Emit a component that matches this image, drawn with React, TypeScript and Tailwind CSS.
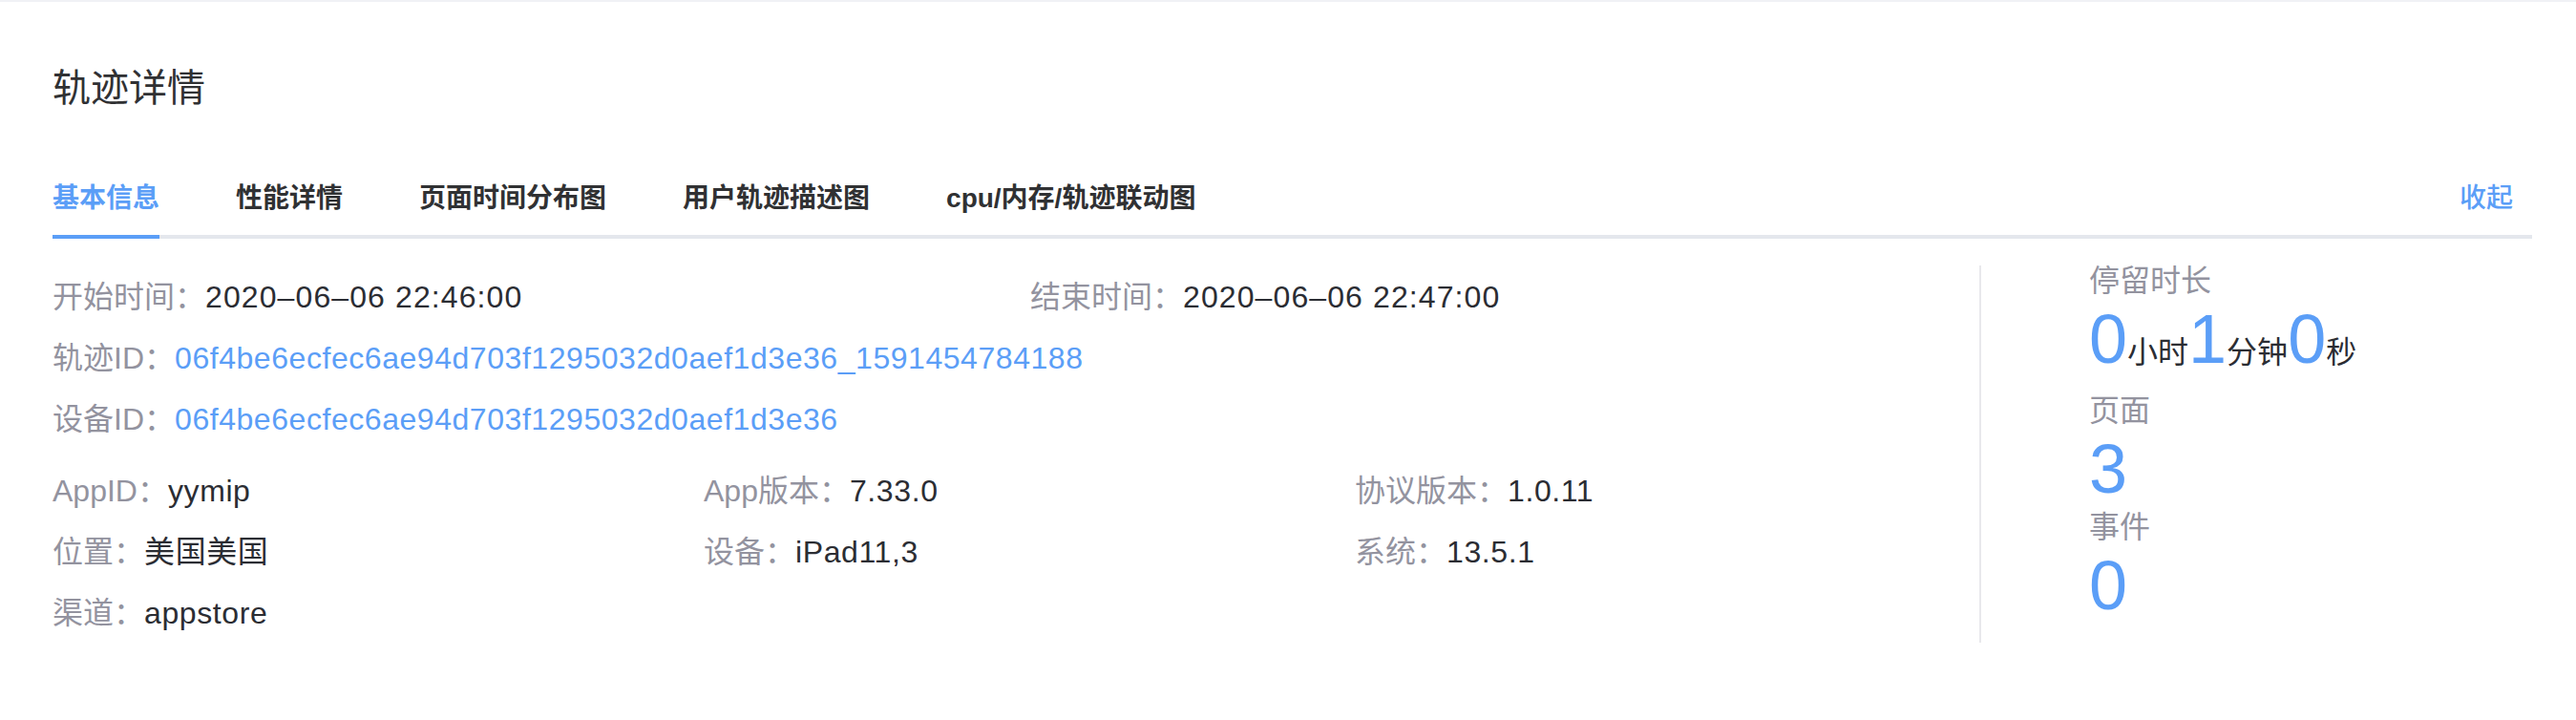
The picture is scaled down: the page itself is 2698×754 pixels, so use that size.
import React from "react";

const LABEL = "text-[#93939f]";
const VALUE = "text-[#2b2d33]";
const BLUE = "text-[#5b9ef7]";

function Field({
  label,
  value,
  blue,
  track = "tracking-[0.6px]",
}: {
  label: string;
  value: string;
  blue?: boolean;
  track?: string;
}) {
  return (
    <div className="whitespace-nowrap text-[32px] leading-[64px]">
      <span className={LABEL}>{label}：</span>
      <span className={(blue ? BLUE : VALUE) + " " + track}>{value}</span>
    </div>
  );
}

const tabs = ["基本信息", "性能详情", "页面时间分布图", "用户轨迹描述图", "cpu/内存/轨迹联动图"];

export default function App() {
  return (
    <div className="w-[2698px] h-[754px] bg-white font-['Liberation_Sans','Noto_Sans_CJK_SC',sans-serif] overflow-hidden">
      <div className="h-[2px] bg-[#f0f1f5]" />
      <div className="pl-[55px] pr-[46px]">
        <h1 className="pt-[62px] text-[40px] leading-[56px] text-[#303133] font-normal">轨迹详情</h1>

        <div className="mt-[50px] relative flex items-start justify-between h-[80px] border-b-[4px] border-[#e4e7ed]">
          <div className="flex">
            {tabs.map((t, i) => (
              <div
                key={t}
                className={
                  "relative h-[76px] leading-[76px] text-[28px] font-semibold whitespace-nowrap " +
                  (i === 0 ? "pr-[40px] " : "px-[40px] ") +
                  (i === 0 ? BLUE : "text-[#303133]")
                }
              >
                {t}
                {i === 0 && <div className="absolute left-0 right-[40px] bottom-[-4px] h-[4px] bg-[#5b9ef7]" />}
              </div>
            ))}
          </div>
          <div className={"h-[76px] leading-[76px] text-[28px] font-medium mr-[20px] " + BLUE}>收起</div>
        </div>

        <div className="flex items-start mt-[20px]">
          <div className="w-[2018px] pt-[9px]">
            <div className="grid grid-cols-[1024px_1fr]">
              <Field label="开始时间" value="2020–06–06 22:46:00" track="tracking-[1.1px]" />
              <Field label="结束时间" value="2020–06–06 22:47:00" track="tracking-[1.1px]" />
            </div>
            <Field
              label="轨迹ID"
              value="06f4be6ecfec6ae94d703f1295032d0aef1d3e36_1591454784188"
              blue
              track="tracking-[0.55px]"
            />
            <Field label="设备ID" value="06f4be6ecfec6ae94d703f1295032d0aef1d3e36" blue track="tracking-[0.55px]" />
            <div className="grid grid-cols-[682px_682px_1fr] mt-[11px]">
              <Field label="AppID" value="yymip" />
              <Field label="App版本" value="7.33.0" />
              <Field label="协议版本" value="1.0.11" />
              <Field label="位置" value="美国美国" />
              <Field label="设备" value="iPad11,3" />
              <Field label="系统" value="13.5.1" />
              <Field label="渠道" value="appstore" />
            </div>
          </div>

          <div className="mt-[8px] h-[395px] w-[2px] bg-[#e8e8ec]" />

          <div className="pl-[113px] pt-[2px] whitespace-nowrap">
            <div className={"text-[32px] leading-[44px] " + LABEL}>停留时长</div>
            <div className="text-[72px] leading-[78px]">
              <span className={BLUE}>0</span>
              <span className={"text-[32px] " + VALUE}>小时</span>
              <span className={BLUE}>1</span>
              <span className={"text-[32px] " + VALUE}>分钟</span>
              <span className={BLUE}>0</span>
              <span className={"text-[32px] " + VALUE}>秒</span>
            </div>
            <div className={"text-[32px] leading-[44px] " + LABEL}>页面</div>
            <div className={"text-[72px] leading-[78px] " + BLUE}>3</div>
            <div className={"text-[32px] leading-[44px] " + LABEL}>事件</div>
            <div className={"text-[72px] leading-[78px] " + BLUE}>0</div>
          </div>
        </div>
      </div>
    </div>
  );
}
